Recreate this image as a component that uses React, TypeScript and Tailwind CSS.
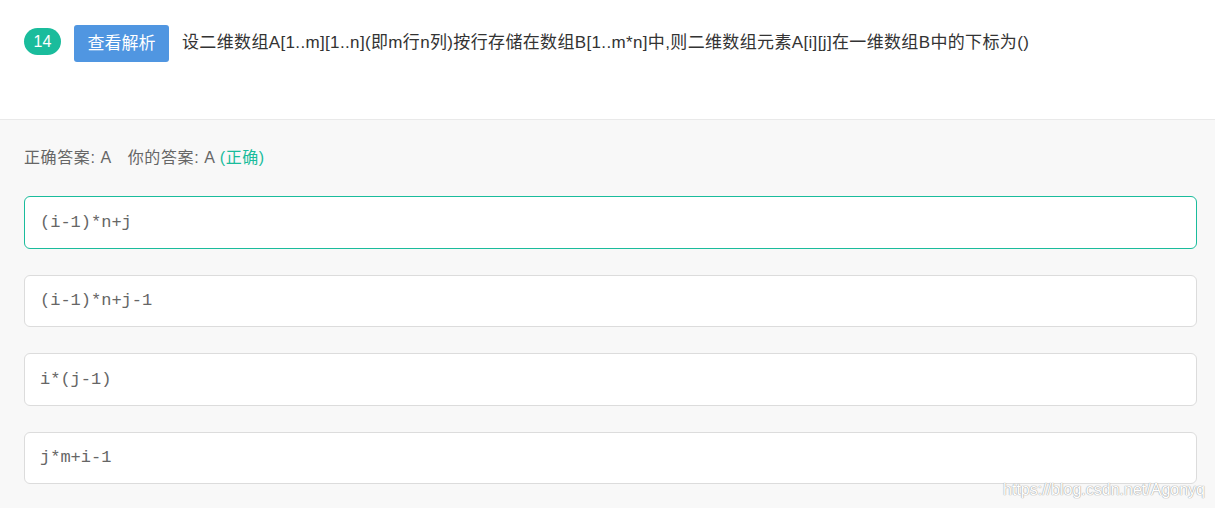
const OPTIONS = ['(i-1)*n+j', '(i-1)*n+j-1', 'i*(j-1)', 'j*m+i-1']

export default function App() {
  return (
    <div className="relative w-[1215px] h-[508px] overflow-hidden bg-[#f8f8f8] font-['Liberation_Sans','Noto_Sans_CJK_SC',sans-serif]">
      <div className="h-[120px] bg-white border-b border-[#e9e9e9] px-6 pt-[25px] flex items-start">
        <span className="mt-[3px] w-[37px] h-[27px] rounded-full bg-[#1abc9c] text-white text-[16px] flex items-center justify-center">14</span>
        <button className="ml-[13px] w-[95px] h-[37px] rounded-[3px] bg-[#5096e1] text-white text-[17px] flex items-center justify-center">查看解析</button>
        <p className="ml-[13px] mt-[7px] text-[17px] tracking-[0.35px] leading-[22px] text-[#333]">
          设二维数组A[1..m][1..n](即m行n列)按行存储在数组B[1..m*n]中,则二维数组元素A[i][j]在一维数组B中的下标为()
        </p>
      </div>

      <div className="pl-6 pr-[18px] pt-[27px]">
        <p className="text-[16px] tracking-[0.6px] leading-[22px] text-[#666]">
          正确答案: A<span className="ml-[16px]">你的答案: A</span> <span className="text-[#1abc9c]">(正确)</span>
        </p>
        <div className="mt-[27px] flex flex-col gap-[26px]">
          {OPTIONS.map((o, i) => (
            <div
              key={o}
              className={`h-[52.5px] rounded-[6px] bg-white border flex items-center px-[15px] ${i === 0 ? 'border-[#1abc9c]' : 'border-[#dcdcdc]'}`}
            >
              <span className="font-['Liberation_Mono',monospace] text-[17px] text-[#666]">{o}</span>
            </div>
          ))}
        </div>
      </div>

      <span className="absolute right-[10px] bottom-[6px] text-[16px] text-white [text-shadow:0_0_1px_#999,0_0_1px_#999]">https://blog.csdn.net/Agonyq</span>
    </div>
  )
}
